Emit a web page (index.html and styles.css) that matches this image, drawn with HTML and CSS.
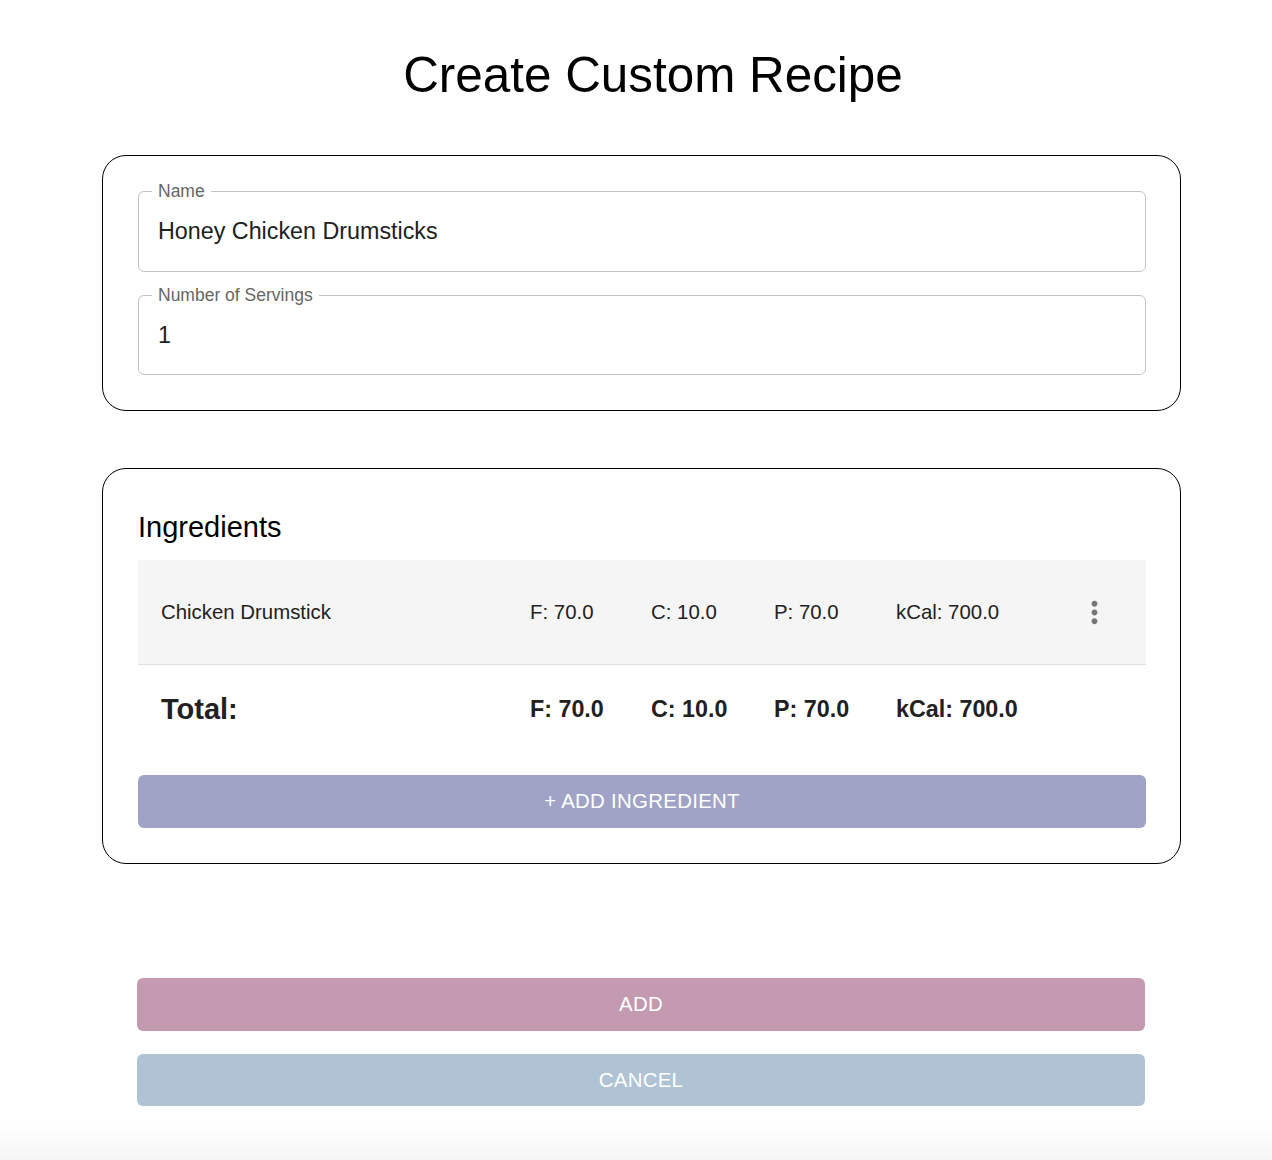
FILE: index.html
```html
<!DOCTYPE html>
<html lang="en">
<head>
<meta charset="utf-8">
<title>Create Custom Recipe</title>
<link rel="stylesheet" href="styles.css">
</head>
<body>
<div class="page">
  <header class="title-wrap">
    <h1 class="title">Create Custom Recipe</h1>
  </header>

  <section class="card details">
    <div class="field">
      <span class="field-label">Name</span>
      <input class="field-input" type="text" value="Honey Chicken Drumsticks">
    </div>
    <div class="field">
      <span class="field-label">Number of Servings</span>
      <input class="field-input" type="text" value="1">
    </div>
  </section>

  <section class="card ingredients">
    <h2 class="section-title">Ingredients</h2>
    <div class="row item">
      <span class="name">Chicken Drumstick</span>
      <span>F: 70.0</span>
      <span>C: 10.0</span>
      <span>P: 70.0</span>
      <span>kCal: 700.0</span>
      <span class="menu">
        <svg viewBox="0 0 24 24" width="35" height="35" aria-hidden="true"><path d="M12 8c1.1 0 2-.9 2-2s-.9-2-2-2-2 .9-2 2 .9 2 2 2zm0 2c-1.1 0-2 .9-2 2s.9 2 2 2 2-.9 2-2-.9-2-2-2zm0 6c-1.1 0-2 .9-2 2s.9 2 2 2 2-.9 2-2-.9-2-2-2z"/></svg>
      </span>
    </div>
    <div class="row total">
      <span class="name total-label">Total:</span>
      <span>F: 70.0</span>
      <span>C: 10.0</span>
      <span>P: 70.0</span>
      <span>kCal: 700.0</span>
      <span></span>
    </div>
    <button class="btn btn-ingredient" type="button">+ Add Ingredient</button>
  </section>

  <div class="actions">
    <button class="btn btn-add" type="button">Add</button>
    <button class="btn btn-cancel" type="button">Cancel</button>
  </div>

  <div class="fade"></div>
</div>
</body>
</html>
```

FILE: styles.css
```css
* {
  box-sizing: border-box;
}

html, body {
  margin: 0;
  padding: 0;
  background: #ffffff;
}

body {
  font-family: "Liberation Sans", Arial, Helvetica, sans-serif;
  color: #212121;
}

.page {
  width: 1272px;
  min-height: 1160px;
  display: flex;
  flex-direction: column;
}

.title-wrap {
  padding: 44px 0 0 34px;
  text-align: center;
}

.title {
  margin: 0;
  font-size: 49.4px;
  line-height: 61px;
  font-weight: 400;
  color: #000;
}

.card {
  margin: 0 91px 0 102px;
  border: 1px solid #000;
  border-radius: 24px;
  padding: 35px 34px 35px 35px;
}

.details {
  margin-top: 50px;
  display: flex;
  flex-direction: column;
  gap: 23px;
}

.field {
  position: relative;
  height: 81px;
  border: 1px solid #c4c4c4;
  border-radius: 6px;
  display: flex;
  align-items: center;
  padding: 0 19px;
}

.field + .field {
  height: 80px;
}

.field-label {
  position: absolute;
  top: -10px;
  left: 13px;
  padding: 0 6px;
  background: #fff;
  font-size: 17.5px;
  line-height: 19px;
  color: #666666;
}

.field-input {
  width: 100%;
  border: 0;
  outline: none;
  padding: 0;
  background: transparent;
  font-family: "Liberation Sans", Arial, Helvetica, sans-serif;
  font-size: 23.3px;
  color: #212121;
}

.ingredients {
  margin-top: 57px;
  display: flex;
  flex-direction: column;
  padding-bottom: 35px;
}

.section-title {
  margin: 0 0 10px;
  font-size: 29px;
  line-height: 46px;
  font-weight: 400;
  color: #000;
}

.row {
  display: grid;
  grid-template-columns: 369px 121px 123px 122px 1fr 70px;
  align-items: center;
  padding: 0 17px 0 23px;
}

.item {
  height: 104px;
  background: #f5f5f5;
  border-bottom: 1px solid #e0e0e0;
  font-size: 20.4px;
  color: #222;
  box-sizing: content-box;
}

.menu {
  display: flex;
  justify-content: center;
  align-items: center;
}

.menu svg {
  fill: #757575;
  display: block;
}

.total {
  height: 88px;
  font-size: 23.3px;
  font-weight: 700;
  color: #212121;
}

.total-label {
  font-size: 29px;
}

.btn {
  display: block;
  width: 100%;
  height: 53px;
  border: 0;
  border-radius: 6px;
  color: #fff;
  font-family: "Liberation Sans", Arial, Helvetica, sans-serif;
  font-size: 20.4px;
  font-weight: 400;
  letter-spacing: 0.3px;
  text-transform: uppercase;
  cursor: pointer;
}

.btn-ingredient {
  margin-top: 22px;
  background: #a0a3c6;
}

.actions {
  margin: 114px 127px 0 137px;
  display: flex;
  flex-direction: column;
  gap: 23px;
}

.btn-add {
  background: #c49ab1;
}

.btn-cancel {
  height: 52px;
  background: #afc3d5;
}

.fade {
  margin-top: auto;
  height: 36px;
  background: linear-gradient(to bottom, #ffffff, #f5f5f5);
}
```
